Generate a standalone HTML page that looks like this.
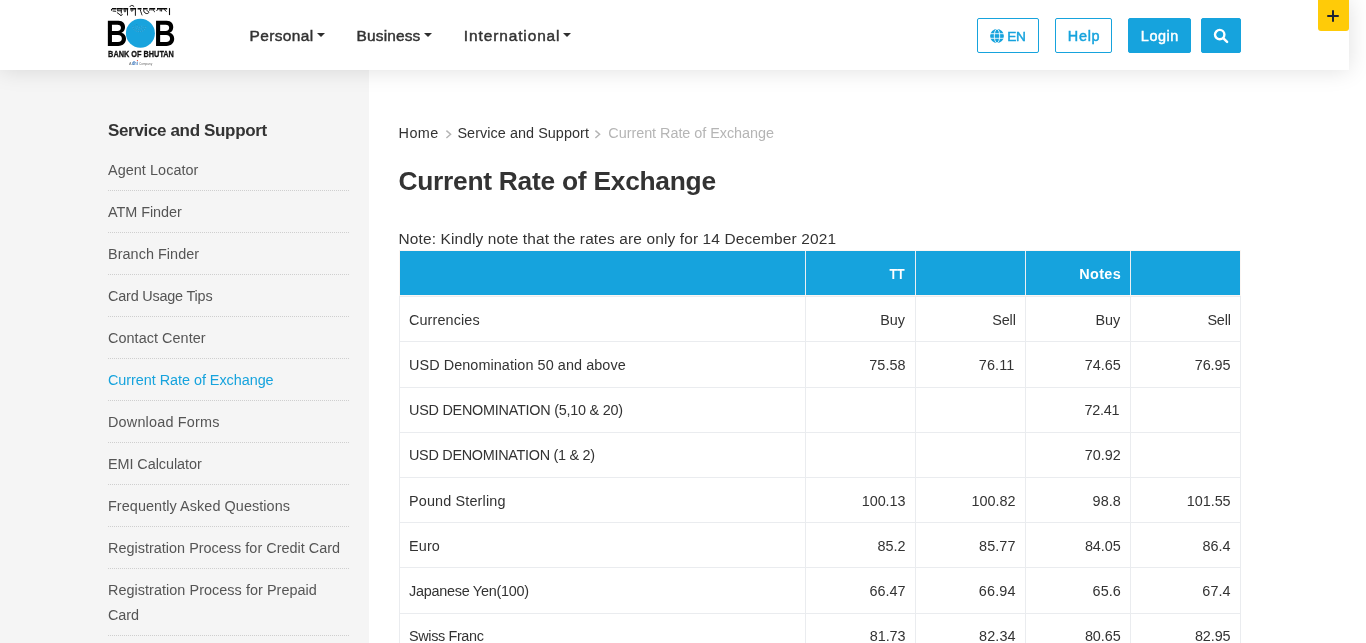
<!DOCTYPE html>
<html lang="en"><head><meta charset="utf-8"><title>Current Rate of Exchange - Bank of Bhutan</title>
<style>
html,body{margin:0;padding:0;}
body{width:1366px;height:643px;overflow:hidden;position:relative;background:#fff;font-family:"Liberation Sans",sans-serif;}
.abs{position:absolute;display:block;}
.t{position:absolute;white-space:nowrap;font-family:"Liberation Sans",sans-serif;margin:0;padding:0;font-weight:normal;text-decoration:none;display:block;}
#side{position:absolute;left:0;top:0;width:369px;height:643px;background:#f5f5f5;}
#hdr{position:absolute;left:0;top:0;width:1349px;height:70px;background:#fff;box-shadow:0 0 22px rgba(0,0,0,.13);}
.btn{position:absolute;top:18px;height:33px;border:1px solid #16a3dd;border-radius:2px;box-sizing:content-box;}
.btn.f{background:#16a3dd;}
.dot{position:absolute;left:108px;width:241px;height:0;border-top:1px dotted #cfcfcf;}
#plus{position:absolute;left:1318px;top:0;width:31px;height:31px;background:#ffcb08;border-radius:0 0 3px 3px;}
#plus:before{content:"";position:absolute;left:9px;top:15px;width:11.9px;height:2.2px;background:#1e2233;border-radius:1px;}
#plus:after{content:"";position:absolute;left:14.2px;top:10.3px;width:2.2px;height:11.6px;background:#1e2233;border-radius:1px;}
#wrap{position:absolute;left:0;top:0;width:1366px;height:643px;overflow:hidden;will-change:transform;}
</style></head><body><div id="wrap">
<aside id="side">
<nav>
<h3 class="t" style="top:121.51px;font-size:17.0px;line-height:17.0px;color:#333;font-weight:bold;left:108.00px;letter-spacing:-0.341px;">Service and Support</h3><a class="t" style="top:162.69px;font-size:14.42px;line-height:14.42px;color:#555;left:108.00px;letter-spacing:0.057px;">Agent Locator</a><a class="t" style="top:204.69px;font-size:14.42px;line-height:14.42px;color:#555;left:108.00px;letter-spacing:-0.042px;">ATM Finder</a><a class="t" style="top:246.69px;font-size:14.42px;line-height:14.42px;color:#555;left:108.00px;letter-spacing:0.050px;">Branch Finder</a><a class="t" style="top:288.69px;font-size:14.42px;line-height:14.42px;color:#555;left:108.00px;letter-spacing:-0.193px;">Card Usage Tips</a><a class="t" style="top:330.69px;font-size:14.42px;line-height:14.42px;color:#555;left:108.00px;letter-spacing:0.053px;">Contact Center</a><a class="t" style="top:372.69px;font-size:14.42px;line-height:14.42px;color:#16a3dd;left:108.00px;letter-spacing:-0.041px;">Current Rate of Exchange</a><a class="t" style="top:414.69px;font-size:14.42px;line-height:14.42px;color:#555;left:108.00px;letter-spacing:0.189px;">Download Forms</a><a class="t" style="top:456.69px;font-size:14.42px;line-height:14.42px;color:#555;left:108.00px;letter-spacing:-0.061px;">EMI Calculator</a><a class="t" style="top:498.69px;font-size:14.42px;line-height:14.42px;color:#555;left:108.00px;letter-spacing:0.072px;">Frequently Asked Questions</a><a class="t" style="top:540.69px;font-size:14.42px;line-height:14.42px;color:#555;left:108.00px;letter-spacing:0.020px;">Registration Process for Credit Card</a><a class="t" style="top:582.69px;font-size:14.42px;line-height:14.42px;color:#555;left:108.00px;letter-spacing:0.046px;">Registration Process for Prepaid</a><a class="t" style="top:607.69px;font-size:14.42px;line-height:14.42px;color:#555;left:108.00px;letter-spacing:-0.048px;">Card</a>
</nav>
<div class="dot" style="top:190px"></div><div class="dot" style="top:232px"></div><div class="dot" style="top:274px"></div><div class="dot" style="top:316px"></div><div class="dot" style="top:358px"></div><div class="dot" style="top:400px"></div><div class="dot" style="top:442px"></div><div class="dot" style="top:484px"></div><div class="dot" style="top:526px"></div><div class="dot" style="top:568px"></div><div class="dot" style="top:635px"></div>
</aside>
<main>
<nav class="breadcrumb">
<a class="t" style="top:125.79px;font-size:14.42px;line-height:14.42px;color:#333;left:398.60px;letter-spacing:0.406px;">Home</a><a class="t" style="top:125.79px;font-size:14.42px;line-height:14.42px;color:#333;left:457.45px;letter-spacing:0.052px;">Service and Support</a><a class="t" style="top:125.79px;font-size:14.42px;line-height:14.42px;color:#b5b5b5;left:608.32px;letter-spacing:-0.038px;">Current Rate of Exchange</a>
<svg class="abs" style="left:444.5px;top:129px" width="9" height="11" viewBox="0 0 9 11"><path d="M1.4 1.6 L5.6 5.3 L1.4 9.0" fill="none" stroke="#b4b4b4" stroke-width="1.45"/></svg><svg class="abs" style="left:594.0px;top:129px" width="9" height="11" viewBox="0 0 9 11"><path d="M1.4 1.6 L5.6 5.3 L1.4 9.0" fill="none" stroke="#b4b4b4" stroke-width="1.45"/></svg>
</nav>
<h1 class="t" style="top:167.68px;font-size:26.37px;line-height:26.37px;color:#333;font-weight:bold;left:398.40px;letter-spacing:-0.260px;">Current Rate of Exchange</h1><p class="t" style="top:230.92px;font-size:15.45px;line-height:15.45px;color:#333;left:398.50px;letter-spacing:0.138px;">Note: Kindly note that the rates are only for 14 December 2021</p>
<section class="rates">
<div class="abs" style="left:399px;top:250px;width:842px;height:46px;background:#fbf6f3"></div><div class="abs" style="left:400px;top:251px;width:840px;height:44px;background:#16a3dd"></div><div class="abs" style="left:805px;top:251px;width:1px;height:44px;background:#e9eff3"></div><div class="abs" style="left:915px;top:251px;width:1px;height:44px;background:#e9eff3"></div><div class="abs" style="left:1025px;top:251px;width:1px;height:44px;background:#e9eff3"></div><div class="abs" style="left:1130px;top:251px;width:1px;height:44px;background:#e9eff3"></div><div class="abs" style="left:399px;top:296px;width:842px;height:1px;background:#eaecef"></div><div class="abs" style="left:399px;top:341px;width:842px;height:1px;background:#eaecef"></div><div class="abs" style="left:399px;top:387px;width:842px;height:1px;background:#eaecef"></div><div class="abs" style="left:399px;top:432px;width:842px;height:1px;background:#eaecef"></div><div class="abs" style="left:399px;top:477px;width:842px;height:1px;background:#eaecef"></div><div class="abs" style="left:399px;top:522px;width:842px;height:1px;background:#eaecef"></div><div class="abs" style="left:399px;top:567px;width:842px;height:1px;background:#eaecef"></div><div class="abs" style="left:399px;top:613px;width:842px;height:1px;background:#eaecef"></div><div class="abs" style="left:399px;top:296px;width:1px;height:360px;background:#eaecef"></div><div class="abs" style="left:805px;top:296px;width:1px;height:360px;background:#eaecef"></div><div class="abs" style="left:915px;top:296px;width:1px;height:360px;background:#eaecef"></div><div class="abs" style="left:1025px;top:296px;width:1px;height:360px;background:#eaecef"></div><div class="abs" style="left:1130px;top:296px;width:1px;height:360px;background:#eaecef"></div><div class="abs" style="left:1240px;top:296px;width:1px;height:360px;background:#eaecef"></div>
<span class="t" style="top:267.39px;font-size:14.42px;line-height:14.42px;color:#fff;font-weight:bold;transform:scaleX(0.864);transform-origin:100% 50%;right:461.18px;letter-spacing:0.000px;">TT</span><span class="t" style="top:267.39px;font-size:14.42px;line-height:14.42px;color:#fff;font-weight:bold;right:244.81px;letter-spacing:0.406px;">Notes</span><span class="t" style="top:312.79px;font-size:14.42px;line-height:14.42px;color:#333;left:409.00px;letter-spacing:0.103px;">Currencies</span><span class="t" style="top:312.79px;font-size:14.42px;line-height:14.42px;color:#333;right:461.21px;letter-spacing:-0.111px;">Buy</span><span class="t" style="top:312.79px;font-size:14.42px;line-height:14.42px;color:#333;right:350.30px;letter-spacing:-0.148px;">Sell</span><span class="t" style="top:312.79px;font-size:14.42px;line-height:14.42px;color:#333;right:245.66px;letter-spacing:0.039px;">Buy</span><span class="t" style="top:312.79px;font-size:14.42px;line-height:14.42px;color:#333;right:135.20px;letter-spacing:-0.148px;">Sell</span><span class="t" style="top:357.79px;font-size:14.42px;line-height:14.42px;color:#333;left:409.00px;letter-spacing:0.073px;">USD Denomination 50 and above</span><span class="t" style="top:357.79px;font-size:14.42px;line-height:14.42px;color:#333;right:460.50px;letter-spacing:0.019px;">75.58</span><span class="t" style="top:357.79px;font-size:14.42px;line-height:14.42px;color:#333;right:351.73px;letter-spacing:0.086px;">76.11</span><span class="t" style="top:357.79px;font-size:14.42px;line-height:14.42px;color:#333;right:245.07px;letter-spacing:0.044px;">74.65</span><span class="t" style="top:357.79px;font-size:14.42px;line-height:14.42px;color:#333;right:135.45px;letter-spacing:-0.031px;">76.95</span><span class="t" style="top:402.79px;font-size:14.42px;line-height:14.42px;color:#333;left:409.00px;letter-spacing:-0.246px;">USD DENOMINATION (5,10 &amp; 20)</span><span class="t" style="top:402.79px;font-size:14.42px;line-height:14.42px;color:#333;right:246.67px;letter-spacing:-0.250px;">72.41</span><span class="t" style="top:447.79px;font-size:14.42px;line-height:14.42px;color:#333;left:409.00px;letter-spacing:-0.286px;">USD DENOMINATION (1 &amp; 2)</span><span class="t" style="top:447.79px;font-size:14.42px;line-height:14.42px;color:#333;right:245.07px;letter-spacing:0.044px;">70.92</span><span class="t" style="top:493.79px;font-size:14.42px;line-height:14.42px;color:#333;left:409.00px;letter-spacing:0.147px;">Pound Sterling</span><span class="t" style="top:493.79px;font-size:14.42px;line-height:14.42px;color:#333;right:460.58px;letter-spacing:-0.064px;">100.13</span><span class="t" style="top:493.79px;font-size:14.42px;line-height:14.42px;color:#333;right:350.52px;letter-spacing:-0.004px;">100.82</span><span class="t" style="top:493.79px;font-size:14.42px;line-height:14.42px;color:#333;right:245.02px;letter-spacing:0.098px;">98.8</span><span class="t" style="top:493.79px;font-size:14.42px;line-height:14.42px;color:#333;right:135.48px;letter-spacing:-0.064px;">101.55</span><span class="t" style="top:538.79px;font-size:14.42px;line-height:14.42px;color:#333;left:409.00px;letter-spacing:0.142px;">Euro</span><span class="t" style="top:538.79px;font-size:14.42px;line-height:14.42px;color:#333;right:460.56px;letter-spacing:-0.043px;">85.2</span><span class="t" style="top:538.79px;font-size:14.42px;line-height:14.42px;color:#333;right:350.43px;letter-spacing:0.087px;">85.77</span><span class="t" style="top:538.79px;font-size:14.42px;line-height:14.42px;color:#333;right:245.13px;letter-spacing:-0.013px;">84.05</span><span class="t" style="top:538.79px;font-size:14.42px;line-height:14.42px;color:#333;right:135.36px;letter-spacing:0.031px;">86.4</span><span class="t" style="top:583.79px;font-size:14.42px;line-height:14.42px;color:#333;left:409.00px;letter-spacing:-0.262px;">Japanese Yen(100)</span><span class="t" style="top:583.79px;font-size:14.42px;line-height:14.42px;color:#333;right:460.55px;letter-spacing:-0.031px;">66.47</span><span class="t" style="top:583.79px;font-size:14.42px;line-height:14.42px;color:#333;right:350.34px;letter-spacing:0.150px;">66.94</span><span class="t" style="top:583.79px;font-size:14.42px;line-height:14.42px;color:#333;right:245.02px;letter-spacing:0.098px;">65.6</span><span class="t" style="top:583.79px;font-size:14.42px;line-height:14.42px;color:#333;right:135.28px;letter-spacing:0.107px;">67.4</span><span class="t" style="top:628.79px;font-size:14.42px;line-height:14.42px;color:#333;left:409.00px;letter-spacing:-0.360px;">Swiss Franc</span><span class="t" style="top:628.79px;font-size:14.42px;line-height:14.42px;color:#333;right:460.60px;letter-spacing:-0.088px;">81.73</span><span class="t" style="top:628.79px;font-size:14.42px;line-height:14.42px;color:#333;right:350.40px;letter-spacing:0.094px;">82.34</span><span class="t" style="top:628.79px;font-size:14.42px;line-height:14.42px;color:#333;right:245.13px;letter-spacing:-0.013px;">80.65</span><span class="t" style="top:628.79px;font-size:14.42px;line-height:14.42px;color:#333;right:135.50px;letter-spacing:-0.088px;">82.95</span>
</section>
</main>
<header id="hdr">

<svg class="abs" style="left:100px;top:0" width="90" height="70" viewBox="100 0 90 70">
  <g fill="none" stroke="#0a0a0a" stroke-linecap="butt" stroke-linejoin="round">
    <g stroke-width="1.35">
      <path d="M111.9 8.75 H116.1 M116.5 8.75 H122.8 M123.2 8.75 H128.2 M130.2 8.75 H136.1 M137.6 8.75 H141.5 M143 8.75 H147.6 M149.3 8.75 H155.2 M157 8.75 H167.2"/>
    </g>
    <g stroke-width="0.95">
      <path d="M111.5 9 V10.7 M112.6 11 L116.1 11.3"/>
      <path d="M117.3 10.8 H121.6 M117.7 9.3 V10.8 M121.3 9.3 V13.4 M116.9 12.5 L120.6 15.2 M120.2 15.3 C121.6 15.8 122.6 15 122 13.9"/>
      <path d="M124.2 9.3 V11.4 C124.6 12 125.6 11.9 125.8 11.2 V9.3 M127.5 8.2 V15.5"/>
      <path d="M131.1 9.3 V10.8 C131.5 11.4 132.6 11.3 132.8 10.6 V9.3 M135.4 8.3 V15.8 M129.8 6.9 C130.4 5.2 132.6 4.8 134.2 6.7"/>
      <path d="M140.2 9.4 C140.2 11 141.2 12 141.4 13.2 C141.5 14 141.8 14.8 142.2 15.3"/>
      <path d="M143.8 9.4 C143.4 11.6 144.4 12.9 146.2 13.5 C147.8 13.9 149.2 13 148.6 11.8 C148.2 11 147.4 10.6 146.6 10.6"/>
      <path d="M149.8 9.3 V10.8 M153.6 9.3 C153.4 11 154.2 11.9 155 11.6 M152 9.3 V10.6"/>
      <path d="M157.6 9.3 L156.6 11 M160.2 9.3 V11.3 M161.6 9.3 V11.5 M164 9.3 L166.6 11.6"/>
      <path d="M169.5 8.1 V15.1" stroke-width="1.1"/>
    </g>
  </g>
  <path d="M0 0 H10.6 C15.4 0 17.2 3 17.2 6.4 C17.2 9.1 15.8 11 13.5 11.9 C16.6 12.7 18.15 14.9 18.15 18 C18.15 22 15.4 25.15 10.4 25.15 H0 Z M4.1 4 V10.2 H9.5 C12 10.2 13.1 9 13.1 7.05 C13.1 5 12 4 9.5 4 Z M4.1 14.2 V21.2 H10.1 C12.8 21.2 14 19.8 14 17.65 C14 15.4 12.7 14.2 10.1 14.2 Z" fill="#000" fill-rule="evenodd" transform="translate(107.85 20.78)"/>
  <path d="M0 0 H10.6 C15.4 0 17.2 3 17.2 6.4 C17.2 9.1 15.8 11 13.5 11.9 C16.6 12.7 18.15 14.9 18.15 18 C18.15 22 15.4 25.15 10.4 25.15 H0 Z M4.1 4 V10.2 H9.5 C12 10.2 13.1 9 13.1 7.05 C13.1 5 12 4 9.5 4 Z M4.1 14.2 V21.2 H10.1 C12.8 21.2 14 19.8 14 17.65 C14 15.4 12.7 14.2 10.1 14.2 Z" fill="#000" fill-rule="evenodd" transform="translate(156.05 20.78)"/>
  <circle cx="140.4" cy="33.3" r="14.5" fill="#18a3dd"/>
  <g fill="none" stroke="#6cc6ee" stroke-width="0.5" opacity="0.55">
    <path d="M132.5 26 A 6.9 6.9 0 0 0 146.1 26"/>
    <path d="M134.6 25.8 A 4.8 4.8 0 0 0 144 25.8"/>
    <path d="M136.8 25.6 A 2.6 2.6 0 0 0 141.8 25.6"/>
  </g>
  <g fill="none" stroke="#1f4f68" stroke-width="0.6" stroke-dasharray="0.6 1.7" opacity="0.75">
    <path d="M132.5 26 A 6.9 6.9 0 0 0 146.1 26"/>
    <path d="M134.6 25.8 A 4.8 4.8 0 0 0 144 25.8"/>
    <path d="M136.8 24.6 A 2.6 2.6 0 0 0 141.8 25.6"/>
  </g>
  <g font-family="Liberation Sans, sans-serif" font-weight="bold" fill="#000">
    <text x="108.1" y="57.3" font-size="8.3" textLength="65.8" lengthAdjust="spacingAndGlyphs" fill="#111" stroke="#111" stroke-width="0.28">BANK OF BHUTAN</text>
  </g>
  <g font-family="Liberation Sans, sans-serif" font-size="3.8">
    <text x="129" y="64.7" fill="#6e6e6e">A</text>
    <text x="132" y="64.7" fill="#2f6db6" font-weight="bold" font-size="5.4" textLength="5.7" lengthAdjust="spacingAndGlyphs">dhi</text>
    <text x="139" y="65.0" fill="#6e6e6e" textLength="13.3" lengthAdjust="spacingAndGlyphs">Company</text>
  </g>
  <circle cx="137.4" cy="60.5" r="0.62" fill="#e8402a"/>
</svg>
<nav>
<a class="t" style="top:27.82px;font-size:15.45px;line-height:15.45px;color:#333;-webkit-text-stroke:0.45px currentColor;left:249.59px;letter-spacing:0.378px;">Personal</a><a class="t" style="top:27.82px;font-size:15.45px;line-height:15.45px;color:#333;-webkit-text-stroke:0.45px currentColor;left:356.59px;letter-spacing:0.157px;">Business</a><a class="t" style="top:27.82px;font-size:15.45px;line-height:15.45px;color:#333;-webkit-text-stroke:0.45px currentColor;left:463.79px;letter-spacing:0.899px;">International</a>
<div class="abs" style="left:317px;top:33px;width:0;height:0;border-left:4px solid transparent;border-right:4px solid transparent;border-top:4px solid #2e2e2e"></div><div class="abs" style="left:424px;top:33px;width:0;height:0;border-left:4px solid transparent;border-right:4px solid transparent;border-top:4px solid #2e2e2e"></div><div class="abs" style="left:563px;top:33px;width:0;height:0;border-left:4px solid transparent;border-right:4px solid transparent;border-top:4px solid #2e2e2e"></div>
</nav>
<div class="actions">
<div class="btn" style="left:977px;width:60px"></div>
<div class="btn" style="left:1055px;width:55px"></div>
<div class="btn f" style="left:1128px;width:61px"></div>
<div class="btn f" style="left:1201px;width:38px"></div>
<svg class="abs" style="left:990px;top:28.7px" width="14" height="14" viewBox="0 0 14 14">
  <circle cx="7" cy="7" r="6.9" fill="#16a3dd"/>
  <g stroke="#fff" stroke-width="0.85" fill="none">
    <ellipse cx="7" cy="7" rx="2.7" ry="6.9"/>
    <path d="M0 4.7 H14 M0 9.3 H14"/>
  </g></svg><svg class="abs" style="left:1213px;top:28px" width="16" height="16" viewBox="0 0 16 16">
  <circle cx="6.7" cy="6.6" r="4.7" fill="none" stroke="#fff" stroke-width="2.4"/>
  <path d="M10.2 10.1 L14.1 13.9" stroke="#fff" stroke-width="2.5" stroke-linecap="round"/></svg>
<span class="t" style="top:29.80px;font-size:13.7px;line-height:13.7px;color:#16a3dd;-webkit-text-stroke:0.45px currentColor;left:1007.13px;letter-spacing:-0.344px;">EN</span><span class="t" style="top:28.59px;font-size:14.42px;line-height:14.42px;color:#16a3dd;-webkit-text-stroke:0.45px currentColor;left:1067.87px;letter-spacing:0.685px;">Help</span><span class="t" style="top:28.59px;font-size:14.42px;line-height:14.42px;color:#fff;-webkit-text-stroke:0.45px currentColor;left:1140.87px;letter-spacing:0.513px;">Login</span>
</div>
<div id="plus"></div>
</header>
</div></body></html>
